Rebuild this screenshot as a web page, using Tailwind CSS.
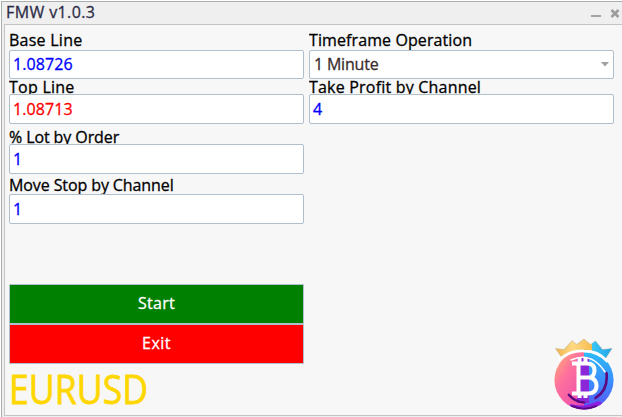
<!DOCTYPE html>
<html lang="en"><head><meta charset="utf-8"><title>FMW v1.0.3</title>
<script src="https://cdn.jsdelivr.net/npm/@tailwindcss/browser@4"></script></head>
<body class="h-[417px] w-[622px] overflow-hidden bg-white pl-px pt-px font-['Trebuchet_MS','Open_Sans',sans-serif] text-[16px] font-normal text-black [-webkit-text-stroke:0.3px_currentColor]">
<main class="flex h-[416px] w-[621px] flex-col border-l border-t border-[#a9afaf] bg-[#efefef] pl-[2px]">
  <header class="flex h-[22px] shrink-0 items-start justify-between pl-[2px]">
    <h1 class="text-[16px] font-normal leading-[20px] tracking-[0.4px] text-[#2c2c48]">FMW v1.0.3</h1>
    <div class="flex pt-[7px] pr-[2px]">
      <svg class="h-[9px] w-[11px]" viewBox="0 0 11 9"><path d="M0 6h10v2H0z" fill="#a3a3a3"/></svg>
      <svg class="ml-[8px] h-[9px] w-[10px]" viewBox="0 0 10 9"><path d="M1.5 1l7 7M8.500 1l-7 7" stroke="#9c9c9c" stroke-width="2.600"/></svg>
    </div>
  </header>
  <section class="relative h-[392px] border-y border-l border-[#c4c4c4] bg-[#f7f7f7] pl-[4px] pt-[5px]">
    <div class="flex gap-[5px]">
      <div class="w-[295px]">
        <div class="h-[20px] overflow-hidden whitespace-nowrap leading-[20px] tracking-[0.25px]">Base Line</div>
        <div class="h-[29px] rounded-[2px] border border-[#b0bfcc] bg-white pl-[3px] leading-[26px] tracking-[0.1px] text-[#0000ff]">1.08726</div>
        <div class="h-[15px] overflow-hidden whitespace-nowrap leading-[16px] tracking-[0.25px]">Top Line</div>
        <div class="h-[30px] rounded-[2px] border border-[#b0bfcc] bg-white pl-[3px] leading-[28px] tracking-[0.1px] text-[#ff0000]">1.08713</div>
        <div class="h-[20px] overflow-hidden whitespace-nowrap leading-[26px] tracking-[-0.1px]">% Lot by Order</div>
        <div class="h-[30px] rounded-[2px] border border-[#b0bfcc] bg-white pl-[3px] leading-[28px] text-[#0000ff]">1</div>
        <div class="h-[20px] overflow-hidden whitespace-nowrap leading-[22px] tracking-[-0.1px]">Move Stop by Channel</div>
        <div class="h-[30px] rounded-[2px] border border-[#b0bfcc] bg-white pl-[3px] leading-[28px] text-[#0000ff]">1</div>
        <button class="mt-[60px] block h-[40px] w-full rounded-[1px] border border-[#b0bfcc] bg-[#008000] pb-[2px] text-center leading-[36px] tracking-[0.25px] text-white">Start</button>
        <button class="block h-[40px] w-full rounded-[1px] border border-[#b0bfcc] bg-[#ff0000] pb-[2px] text-center leading-[36px] tracking-[0.5px] text-white">Exit</button>
        <div class="h-[50px] origin-left scale-x-[0.89] whitespace-nowrap text-[40px] font-normal leading-[50px] text-[#ffd700] [-webkit-text-stroke:0.8px_currentColor]">EURUSD</div>
      </div>
      <div class="w-[305px]">
        <div class="h-[20px] overflow-hidden whitespace-nowrap leading-[20px] tracking-[0.1px]">Timeframe Operation</div>
        <div class="flex h-[29px] items-center justify-between rounded-[2px] border border-[#b0bfcc] bg-white pl-[4px] pr-[4px] text-[#3a2c2c]"><span class="h-[27px] leading-[26px] tracking-[-0.2px]">1 Minute</span>
          <svg class="h-[5px] w-[8px]" viewBox="0 0 8 5"><path d="M0 0h8L4 4.500z" fill="#a0a0a0"/></svg></div>
        <div class="h-[15px] overflow-hidden whitespace-nowrap leading-[16px] tracking-[0.2px]">Take Profit by Channel</div>
        <div class="h-[30px] rounded-[2px] border border-[#b0bfcc] bg-white pl-[3px] leading-[28px] text-[#0000ff]">4</div>
      </div>
    </div>
    <svg class="absolute left-[547px] top-[311px] h-[76px] w-[64px]" viewBox="552 336 64 76">
      <defs>
        <linearGradient id="l" x1="0" y1="0" x2=".7" y2="1"><stop offset="0" stop-color="#ffc466"/><stop offset=".45" stop-color="#ff739b"/><stop offset="1" stop-color="#ed4eae"/></linearGradient>
        <linearGradient id="r" x1="0" y1="0" x2="0" y2="1"><stop offset="0" stop-color="#2ac4f5"/><stop offset=".55" stop-color="#3c8cff"/><stop offset="1" stop-color="#5a50f0"/></linearGradient>
        <linearGradient id="c" x1="0" y1="0" x2="1" y2="0"><stop offset="0" stop-color="#eeb34a"/><stop offset=".3" stop-color="#ffd985"/><stop offset=".64" stop-color="#f7bd50"/><stop offset=".65" stop-color="#3ac6f4"/><stop offset="1" stop-color="#22a5eb"/></linearGradient>
        <clipPath id="k"><circle cx="584" cy="380" r="29.600"/></clipPath>
      </defs>
      <g clip-path="url(#k)"><path d="M554 347h30v64h-30z" fill="url(#l)"/><path d="M584 347h31v64h-31z" fill="url(#r)"/>
        <path d="M577 357h12v46h-12z" fill="#8a28d8"/>
        <path d="M570 404q15 4 28-3l6 3v9h-34z" fill="#8a1fe0"/>
        <path d="M569 395q6 7 15 7.500M606.500 373q2 17-11 25M572 406.500q12 5 24 0" fill="none" stroke="#5c087f" stroke-width="2.600" stroke-linecap="round"/>
        <path d="M571 360q20-9 34 12" fill="none" stroke="#fff" stroke-width="1.500" stroke-linecap="round"/></g>
      <path d="M555.500 348.500l8.500 1 8-9 4.500 4 7.500-5.500 6.500 5.500 5-3.500 7 8.500 9.500-1-6.500 10q-9-9-23-8.500-11 .5-20 8.500z" fill="url(#c)" stroke="#a9a283" stroke-width=".4"/>
      <path d="M559.500 359.500q10-9 24.500-8.500 14 0 23 10" fill="none" stroke="#fff" stroke-width="2.800" stroke-linecap="round"/>
      <path d="M572 363.500h15q7.500 0 7.500 7 0 5-4 7 6 2 6 8 0 8-9 8h-15.500M578.500 364v29M579 377.500h11M579.500 357.500v6M585.500 357.500v6M579.500 393v5M585.500 393v5" fill="none" stroke="#fff" stroke-width="4"/>
    </svg>
  </section>
</main>
</body></html>
